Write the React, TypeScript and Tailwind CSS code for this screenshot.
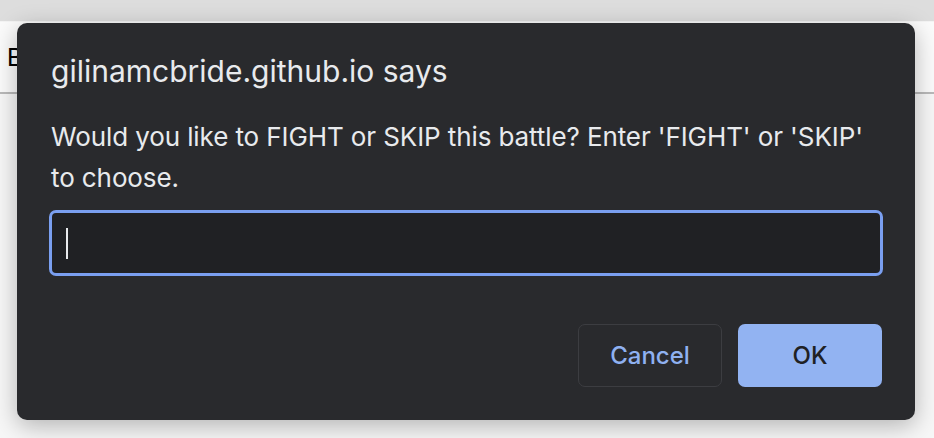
import { useState } from 'react';

const App = () => {
  const [value] = useState('');

  return (
    <main className="relative h-[438px] w-[934px] overflow-hidden bg-[#f7f7f7] font-['Inter',sans-serif]">
      {/* browser chrome strip */}
      <div className="h-[22px] border-b border-[#f4f4f4] bg-[#dddddd]" />
      <div className="h-[72px] border-b-2 border-[#b9b9b9] bg-[#fbfbfb] pl-[7px] pt-[23px] font-['Liberation_Sans',sans-serif] text-[25px] leading-none text-black">
        B
      </div>

      {/* prompt dialog */}
      <div className="absolute left-[17px] top-[23px] flex h-[397px] w-[898px] flex-col rounded-[10px] bg-[#292a2d] px-[32px] pt-[30px] shadow-[0_6px_24px_rgba(0,0,0,0.28)]">
        <h1 className="pl-[2px] text-[30px] font-normal leading-[36px] text-[#e8eaed]">gilinamcbride.github.io says</h1>
        <p className="mt-[27px] pl-[2px] text-[26px] leading-[41px] tracking-[-0.1px] text-[#e8eaed]">
          Would you like to FIGHT or SKIP this battle? Enter 'FIGHT' or 'SKIP' to choose.
        </p>
        <div className="mt-[12px] flex h-[66px] items-center rounded-[7px] border-[3px] border-[#7a9ff0] bg-[#202124] pl-[14px]">
          <span className="text-[24px] text-[#e8eaed]">{value}</span>
          <span className="h-[31px] w-[2px] bg-[#e8eaed]" />
        </div>
        <div className="mt-[48px] flex justify-end gap-[16px] pr-[1px]">
          <button
            type="button"
            className="h-[63px] w-[144px] rounded-[7px] border border-[#3c3d41] text-[24px] font-medium text-[#8fb1f1]"
          >
            Cancel
          </button>
          <button
            type="button"
            className="h-[63px] w-[144px] rounded-[7px] bg-[#92b3f2] text-[24px] font-medium text-[#202124]"
          >
            OK
          </button>
        </div>
      </div>
    </main>
  );
};

export default App;
